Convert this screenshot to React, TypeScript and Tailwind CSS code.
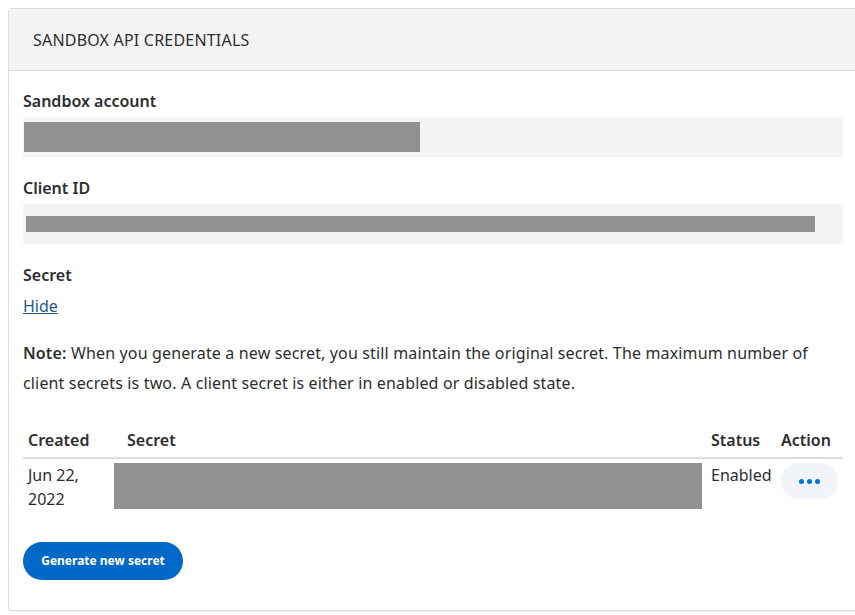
const Redacted = ({ className }: { className: string }) => (
  <div className={`bg-[#919191] ${className}`} />
);

const Label = ({ children, className = "" }: { children: React.ReactNode; className?: string }) => (
  <div className={`text-[16px] leading-6 font-semibold text-[#2c2e2f] ${className}`}>{children}</div>
);

export default function App() {
  return (
    <div className="w-full min-h-[615px] overflow-hidden bg-white pt-2 pl-2 font-['Noto_Sans',sans-serif] text-[#2c2e2f]">
      <div className="w-[850px] rounded-[3px] border border-[#dcdcdc] shadow-[0_1px_2px_rgba(0,0,0,0.06)]">
        <div className="flex h-[62px] items-center border-b border-[#dcdcdc] bg-[#f4f4f4] px-6">
          <h2 className="text-[16px] tracking-[0.2px] uppercase">Sandbox API Credentials</h2>
        </div>

        <div className="px-[14px] pt-[18px] pb-[30px]">
          <Label>Sandbox account</Label>
          <div className="mt-1 flex h-10 w-[820px] items-center bg-[#f4f4f4] pl-px">
            <Redacted className="h-[30px] w-[396px]" />
          </div>

          <Label className="mt-[19px]">Client ID</Label>
          <div className="mt-1 flex h-10 w-[820px] items-center bg-[#f4f4f4] pl-[3px]">
            <Redacted className="h-4 w-[789px]" />
          </div>

          <Label className="mt-[19px]">Secret</Label>
          <a href="#" className="mt-[7px] block text-[16px] leading-6 text-[#1f5591] underline">
            Hide
          </a>

          <p className="mt-[20px] w-[812px] text-[16px] leading-[30px] tracking-[0.15px]">
            <span className="font-semibold">Note:</span> When you generate a new secret, you still maintain the
            original secret. The maximum number of client secrets is two. A client secret is either in enabled or
            disabled state.
          </p>

          <div className="mt-[30px] w-[820px]">
            <div className="grid grid-cols-[99px_584px_70px_1fr] border-b-2 border-[#dcdcdc] pb-[5px] text-[16px] leading-6 font-semibold">
              <div className="pl-[5px]">Created</div>
              <div className="pl-[5px]">Secret</div>
              <div className="pl-[5px]">Status</div>
              <div className="pl-[5px]">Action</div>
            </div>
            <div className="grid grid-cols-[99px_584px_70px_1fr] pt-1 text-[16px] leading-6">
              <div className="pl-[5px]">
                Jun 22,
                <br />
                2022
              </div>
              <div>
                <Redacted className="-ml-2 h-[46px] w-[588px]" />
              </div>
              <div className="pl-[5px]">Enabled</div>
              <div className="pl-[5px]">
                <button className="flex h-9 w-[57px] items-center justify-center gap-[3px] rounded-full bg-[#f1f4f8]">
                  <span className="h-[5px] w-[5px] rounded-full bg-[#0070e0]" />
                  <span className="h-[5px] w-[5px] rounded-full bg-[#0070e0]" />
                  <span className="h-[5px] w-[5px] rounded-full bg-[#0070e0]" />
                </button>
              </div>
            </div>
          </div>

          <button className="mt-[31px] h-[38px] w-[160px] rounded-full bg-[#0068c6] text-[12px] font-bold text-white">
            Generate new secret
          </button>
        </div>
      </div>
    </div>
  );
}
